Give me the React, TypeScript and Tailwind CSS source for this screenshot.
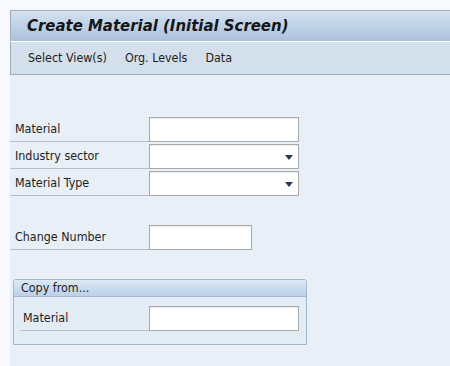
import { ChangeEvent, useState } from 'react'

const font = { fontFamily: 'Tahoma, "DejaVu Sans Condensed", "Liberation Sans", sans-serif' }

function Arrow() {
    return (
        <svg width="8" height="5" viewBox="0 0 8 5" className="absolute right-[5px] top-[10px]">
            <path d="M0 0 H8 L4 5 Z" fill="#2b3950" />
        </svg>
    )
}

function Field({
    label,
    value,
    onChange,
    width = 'w-[150px]',
    labelWidth = 'w-[139px]',
    labelPad = 'pl-[5px]',
    dropdown = false,
}: {
    label: string
    value: string
    onChange: (v: string) => void
    width?: string
    labelWidth?: string
    labelPad?: string
    dropdown?: boolean
}) {
    return (
        <div className="flex items-stretch h-[25px]">
            <div className={`${labelWidth} ${labelPad} flex items-center pt-[1px] border-b border-[#b4bfcb] text-[12.4px] text-[#1d1d1d]`}>
                {label}
            </div>
            <div className={`relative ${width} h-[25px] bg-white border border-[#a9a9a9] shadow-[inset_0_1px_1px_rgba(0,0,0,0.08)]`}>
                <input
                    value={value}
                    onChange={(e: ChangeEvent<HTMLInputElement>) => onChange(e.target.value)}
                    className="w-full h-full px-1 text-[12px] outline-none bg-transparent"
                    style={font}
                />
                {dropdown && <Arrow />}
            </div>
        </div>
    )
}

export default function App() {
    const [material, setMaterial] = useState('')
    const [sector, setSector] = useState('')
    const [tipo, setTipo] = useState('')
    const [change, setChange] = useState('')
    const [copy, setCopy] = useState('')

    return (
        <div className="w-[450px] h-[366px] overflow-hidden bg-[#f8f9fc] pt-[10px] pl-[10px] flex flex-col" style={font}>
            {/* cabeçalho */}
            <div className="h-[31px] border-t border-l border-[#a3acb8] bg-gradient-to-b from-[#d4e2f1] to-[#aac1dc] pl-[16px] flex items-center">
                <h1 className="text-[16.6px] font-bold italic text-[#161616]">Create Material (Initial Screen)</h1>
            </div>
            <div className="h-[1px] bg-white" />
            <div className="h-[33px] bg-[#d3dfea] border-l border-b border-[#a0aab6] pl-[17px] flex items-center gap-[18px] text-[12.4px] text-[#1d1d1d]">
                <span>Select View(s)</span>
                <span>Org. Levels</span>
                <span>Data</span>
            </div>

            <div className="flex-1 bg-[#e8eff7] pt-[42px]">
                <div className="flex flex-col gap-[2px]">
                    <Field label="Material" value={material} onChange={setMaterial} />
                    <Field label="Industry sector" value={sector} onChange={setSector} dropdown />
                    <Field label="Material Type" value={tipo} onChange={setTipo} dropdown />
                </div>

                <div className="mt-[29px]">
                    <Field label="Change Number" value={change} onChange={setChange} width="w-[103px]" />
                </div>

                {/* Copy from */}
                <div className="ml-[3px] mt-[29px] w-[294px] border border-[#a3b5cb] rounded-t-[3px] bg-[#e3ebf4]">
                    <div className="h-[17px] bg-gradient-to-b from-[#dce8f5] to-[#bcd1e8] border-b border-[#a3b5cb] pl-[7px] flex items-center text-[12.4px] text-[#1d1d1d]">
                        Copy from...
                    </div>
                    <div className="pl-[6px] pt-[9px] pb-[13px]">
                        <Field label="Material" value={copy} onChange={setCopy} labelWidth="w-[129px]" labelPad="pl-[3px]" />
                    </div>
                </div>
            </div>
        </div>
    )
}
